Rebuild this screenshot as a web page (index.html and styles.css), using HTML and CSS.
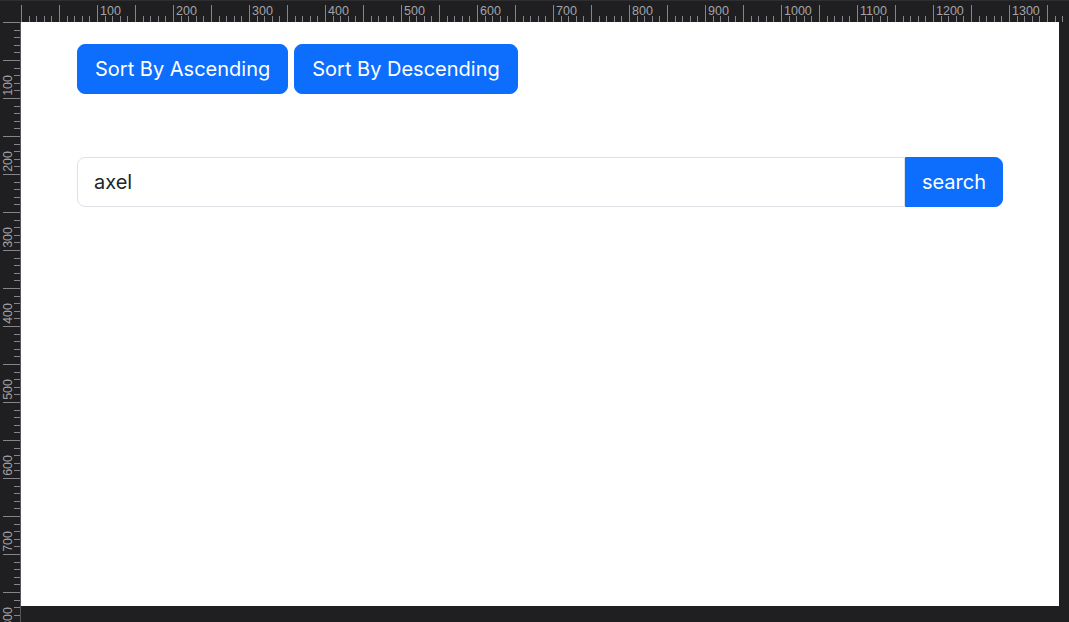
FILE: index.html
```html
<!DOCTYPE html>
<html lang="en">
<head>
<meta charset="utf-8">
<title>Sort and search</title>
<link rel="stylesheet" href="styles.css">
</head>
<body>
<div class="frame">
  <div class="corner"></div>
  <div class="ruler-top">
    <span class="rt-label">100</span>
    <span class="rt-label">200</span>
    <span class="rt-label">300</span>
    <span class="rt-label">400</span>
    <span class="rt-label">500</span>
    <span class="rt-label">600</span>
    <span class="rt-label">700</span>
    <span class="rt-label">800</span>
    <span class="rt-label">900</span>
    <span class="rt-label">1000</span>
    <span class="rt-label">1100</span>
    <span class="rt-label">1200</span>
    <span class="rt-label">1300</span>
  </div>
  <div class="ruler-left">
    <div class="rl-cell"><span class="rl-label">100</span></div>
    <div class="rl-cell"><span class="rl-label">200</span></div>
    <div class="rl-cell"><span class="rl-label">300</span></div>
    <div class="rl-cell"><span class="rl-label">400</span></div>
    <div class="rl-cell"><span class="rl-label">500</span></div>
    <div class="rl-cell"><span class="rl-label">600</span></div>
    <div class="rl-cell"><span class="rl-label">700</span></div>
    <div class="rl-cell"><span class="rl-label">800</span></div>
  </div>
  <main class="page">
    <div class="btn-row">
      <button class="btn">Sort By Ascending</button>
      <button class="btn">Sort By Descending</button>
    </div>
    <div class="search-group">
      <input class="search-input" type="text" value="axel">
      <button class="btn btn-search">search</button>
    </div>
  </main>
</div>
</body>
</html>
```

FILE: styles.css
```css
* { box-sizing: border-box; }

html, body {
  margin: 0;
  padding: 0;
  background: #1f1f21;
  overflow: hidden;
}

.frame {
  display: grid;
  grid-template-columns: 21px 1038px 10px;
  grid-template-rows: 22px 584px 16px;
  width: 1069px;
  height: 622px;
  overflow: hidden;
  background: #1f1f21;
}

.corner {
  grid-column: 1;
  grid-row: 1;
  border-top: 1px solid #2e2e30;
}

.ruler-top {
  grid-column: 2 / 4;
  grid-row: 1;
  display: flex;
  padding-left: 76px;
  border-top: 1px solid #2e2e30;
  background-image:
    repeating-linear-gradient(to right, #85858a 0 1px, transparent 1px 7.6px),
    repeating-linear-gradient(to right, #85858a 0 1px, transparent 1px 38px);
  background-size: 100% 6px, 100% 17px;
  background-position: left bottom, left bottom;
  background-repeat: no-repeat;
  overflow: hidden;
}

.rt-label {
  flex: 0 0 76px;
  padding-left: 3px;
  padding-top: 3px;
  font-family: "Liberation Sans", Arial, sans-serif;
  font-size: 12.5px;
  line-height: 14px;
  color: #a3a3a8;
  white-space: nowrap;
}

.ruler-left {
  grid-column: 1;
  grid-row: 2 / 4;
  display: flex;
  flex-direction: column;
  border-right: 1px solid #55555a;
  background-image:
    repeating-linear-gradient(to bottom, #85858a 0 1px, transparent 1px 7.6px),
    repeating-linear-gradient(to bottom, #85858a 0 1px, transparent 1px 38px);
  background-size: 6px 100%, 17px 100%;
  background-position: right top, right top;
  background-repeat: no-repeat;
  overflow: hidden;
}

.rl-cell {
  flex: 0 0 76px;
  display: flex;
  flex-direction: column;
  justify-content: flex-end;
  align-items: flex-start;
}

.rl-label {
  writing-mode: vertical-rl;
  transform: rotate(180deg);
  padding-top: 2px;
  margin-left: 2px;
  font-family: "Liberation Sans", Arial, sans-serif;
  font-size: 12.5px;
  line-height: 13px;
  color: #a3a3a8;
  white-space: nowrap;
}

.page {
  grid-column: 2;
  grid-row: 2;
  background: #ffffff;
  padding: 22px 56px;
  font-family: Inter, "Liberation Sans", sans-serif;
}

.btn-row {
  display: flex;
  gap: 6px;
}

.btn {
  height: 50px;
  padding: 0 17px;
  border: 1px solid #0d6efd;
  border-radius: 8px;
  background: #0d6efd;
  color: #ffffff;
  font-family: Inter, "Liberation Sans", sans-serif;
  font-size: 20px;
  line-height: 1.5;
  cursor: pointer;
}

.search-group {
  display: flex;
  margin-top: 63px;
}

.search-input {
  flex: 1;
  height: 50px;
  padding: 0 16px;
  border: 1px solid #dee2e6;
  border-radius: 8px 0 0 8px;
  font-family: Inter, "Liberation Sans", sans-serif;
  font-size: 20px;
  color: #212529;
  outline: none;
}

.btn-search {
  padding: 0 16px;
  border-radius: 0 8px 8px 0;
}
```
